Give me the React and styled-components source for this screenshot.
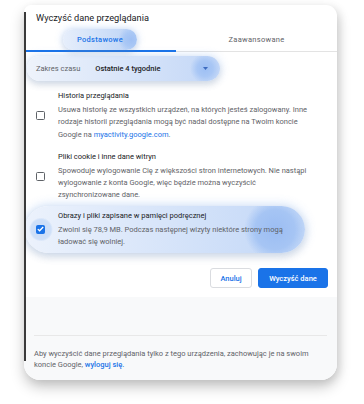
import React from "react";
import styled, { createGlobalStyle } from "styled-components";

const GlobalStyle = createGlobalStyle`
  html, body {
    margin: 0;
    padding: 0;
    background: #fff;
  }
  body {
    font-family: Roboto, "Noto Sans", "Liberation Sans", sans-serif;
  }
`;

const Page = styled.div`
  padding: 5px 0 25px 24px;
`;

const Card = styled.div`
  position: relative;
  width: 313px;
  background: #fff;
  border-radius: 7px 11px 16px 16px;
  box-shadow: 0 7px 14px rgba(0, 0, 0, 0.22), 3px 2px 8px rgba(0, 0, 0, 0.08);
  overflow: hidden;

  &::before {
    content: "";
    position: absolute;
    left: 0;
    top: 7px;
    bottom: 19px;
    width: 1.5px;
    background: #3a3a3a;
  }
`;

const Title = styled.div`
  padding: 6px 12px 0;
  font-size: 9.2px;
  line-height: 14px;
  color: #202124;
`;

const TabBar = styled.div`
  display: flex;
  margin-top: 4px;
  border-bottom: 1px solid #e3e3e3;
`;

const Tab = styled.div`
  flex: 0 0 ${(p) => p.$width}px;
  height: 23px;
  display: flex;
  align-items: flex-start;
  justify-content: center;
  box-sizing: border-box;
  border-bottom: 2px solid ${(p) => (p.$active ? "#1a73e8" : "transparent")};
  margin-bottom: -1px;
  font-size: 7.5px;
  letter-spacing: 0.3px;
  color: ${(p) => (p.$active ? "#1a73e8" : "#5f6368")};
  font-weight: ${(p) => (p.$active ? 500 : 400)};
`;

const TabLabel = styled.span`
  display: flex;
  align-items: center;
  justify-content: center;
  height: 21px;
  width: 74px;
  border-radius: 11px;
  ${(p) =>
    p.$glow &&
    `
    background:
      radial-gradient(circle at calc(100% - 6px) 50%, #9fc0f4 0, #aac8f5 7px, rgba(170,200,245,0) 13px),
      linear-gradient(90deg, #e6eefb, #bcd3f6);
    box-shadow: 0 0 7px 1px rgba(120, 170, 240, 0.35), 0 3px 6px rgba(0, 0, 0, 0.08);
  `}
`;

const Select = styled.div`
  display: flex;
  align-items: center;
  width: 193px;
  height: 25px;
  margin: 4px 0 0 3px;
  padding-left: 9px;
  box-sizing: border-box;
  border-radius: 13px;
  background:
    radial-gradient(circle at calc(100% - 15px) 50%, #9dbff4 0, #a9c7f5 8px, rgba(175, 204, 246, 0) 15px),
    linear-gradient(90deg, #eef3fb, #c3d7f7);
  box-shadow: 0 0 8px 1px rgba(120, 170, 240, 0.3), 0 4px 7px rgba(0, 0, 0, 0.1);
`;

const SelectLabel = styled.span`
  font-size: 7.5px;
  color: #5f6368;
`;

const SelectValue = styled.span`
  margin-left: 15px;
  font-size: 7.5px;
  font-weight: 500;
  color: #202124;
  flex: 1;
`;

const Arrow = styled.span`
  display: flex;
  align-items: center;
  justify-content: center;
  width: 30px;
  height: 25px;
`;

const Item = styled.div`
  display: flex;
  align-items: center;
  margin: ${(p) => p.$top}px ${(p) => (p.$highlight ? "32px 0 1px" : "12px 0 12px")};
  padding: ${(p) => (p.$highlight ? "4px 8px 5px 11px" : "0")};
  border-radius: 24px;
  ${(p) =>
    p.$highlight &&
    `
    background:
      radial-gradient(circle at 16px 50%, #cadcf8 0, #cfe0f8 10px, rgba(207,224,248,0) 12px),
      radial-gradient(circle at calc(100% - 30px) 50%, #9bbdf3 0, #a6c5f4 20px, rgba(170,200,245,0) 31px),
      linear-gradient(90deg, #ecf2fc, #c2d7f7);
    box-shadow: 0 0 10px 2px rgba(120, 170, 240, 0.3), 0 4px 8px rgba(0, 0, 0, 0.1);
  `}
`;

const Box = styled.span`
  flex: 0 0 9px;
  width: 9px;
  height: 9px;
  box-sizing: border-box;
  border-radius: 1.5px;
  border: 1.5px solid ${(p) => (p.$checked ? "#1a73e8" : "#5f6368")};
  background: ${(p) => (p.$checked ? "#1a73e8" : "transparent")};
  display: flex;
  align-items: center;
  justify-content: center;
  margin-right: 13px;
`;

const ItemText = styled.div`
  flex: 1;
`;

const ItemTitle = styled.div`
  font-size: 7.5px;
  line-height: 12px;
  margin-bottom: 2px;
  color: #202124;
`;

const ItemDesc = styled.div`
  font-size: 7.5px;
  line-height: 12.3px;
  color: #5f6368;
  white-space: nowrap;
`;

const Link = styled.span`
  color: #1a73e8;
  font-weight: ${(p) => (p.$bold ? 500 : 400)};
`;

const Actions = styled.div`
  display: flex;
  justify-content: flex-end;
  gap: 6px;
  padding: 15px 9px 9px;
`;

const Button = styled.button`
  height: 20px;
  width: ${(p) => p.$width}px;
  padding: 0;
  border-radius: 3px;
  font-family: inherit;
  font-size: 7.5px;
  font-weight: 500;
  border: 1px solid ${(p) => (p.$primary ? "#1a73e8" : "#dadce0")};
  background: ${(p) => (p.$primary ? "#1a73e8" : "#fff")};
  color: ${(p) => (p.$primary ? "#fff" : "#1a73e8")};
`;

const Footer = styled.div`
  background: #f8f9fa;
  padding: 38px 10px 10px;
`;

const FooterText = styled.div`
  border-top: 1px solid #e8e8e8;
  padding-top: 12px;
  font-size: 7.5px;
  line-height: 11px;
  color: #5f6368;
  white-space: nowrap;
`;

const Check = () => (
  <svg width="7" height="6" viewBox="0 0 7 6">
    <path d="M0.8 3.1 L2.6 4.8 L6.2 1" fill="none" stroke="#fff" strokeWidth="1.3" />
  </svg>
);

const items = [
  {
    title: "Historia przeglądania",
    top: 9,
    lines: [
      "Usuwa historię ze wszystkich urządzeń, na których jesteś zalogowany. Inne",
      "rodzaje historii przeglądania mogą być nadal dostępne na Twoim koncie",
      <>
        Google na <Link>myactivity.google.com</Link>.
      </>,
    ],
  },
  {
    title: "Pliki cookie i inne dane witryn",
    top: 10,
    lines: [
      "Spowoduje wylogowanie Cię z większości stron internetowych. Nie nastąpi",
      "wylogowanie z konta Google, więc będzie można wyczyścić",
      "zsynchronizowane dane.",
    ],
  },
  {
    title: "Obrazy i pliki zapisane w pamięci podręcznej",
    top: 4,
    checked: true,
    lines: ["Zwolni się 78,9 MB. Podczas następnej wizyty niektóre strony mogą", "ładować się wolniej."],
  },
];

export default function App() {
  return (
    <>
      <GlobalStyle />
      <Page>
        <Card>
          <Title>Wyczyść dane przeglądania</Title>
          <TabBar>
            <Tab $active $width={152}>
              <TabLabel $glow>Podstawowe</TabLabel>
            </Tab>
            <Tab $width={161}>
              <TabLabel>Zaawansowane</TabLabel>
            </Tab>
          </TabBar>
          <Select>
            <SelectLabel>Zakres czasu</SelectLabel>
            <SelectValue>Ostatnie 4 tygodnie</SelectValue>
            <Arrow>
              <svg width="5" height="3" viewBox="0 0 5 3">
                <path d="M0 0 L5 0 L2.5 3 Z" fill="#3d6bbf" />
              </svg>
            </Arrow>
          </Select>
          {items.map((it) => (
            <Item key={it.title} $top={it.top} $highlight={it.checked}>
              <Box $checked={it.checked}>{it.checked && <Check />}</Box>
              <ItemText>
                <ItemTitle>{it.title}</ItemTitle>
                <ItemDesc>
                  {it.lines.map((l, i) => (
                    <div key={i}>{l}</div>
                  ))}
                </ItemDesc>
              </ItemText>
            </Item>
          ))}
          <Actions>
            <Button $width={42}>Anuluj</Button>
            <Button $primary $width={70}>
              Wyczyść dane
            </Button>
          </Actions>
          <Footer>
            <FooterText>
              <div>Aby wyczyścić dane przeglądania tylko z tego urządzenia, zachowując je na swoim</div>
              <div>
                koncie Google, <Link $bold>wyloguj się.</Link>
              </div>
            </FooterText>
          </Footer>
        </Card>
      </Page>
    </>
  );
}
